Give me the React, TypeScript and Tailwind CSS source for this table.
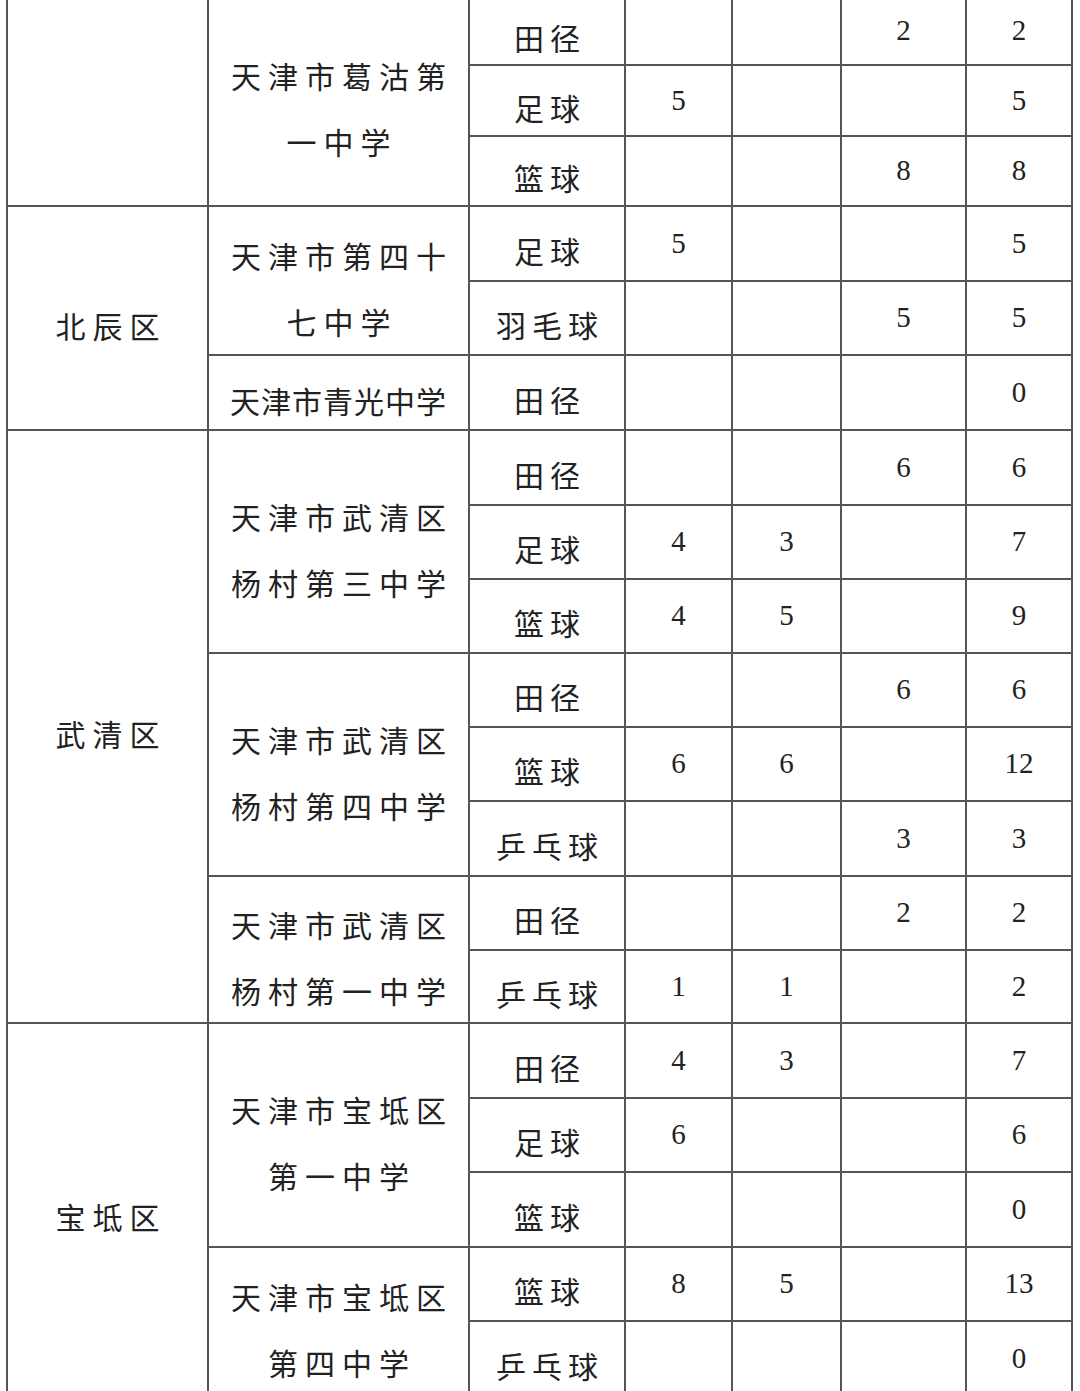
import React from "react";

type Row = { sport: string; vals: (number | "")[] };

const rows: Row[] = [
  { sport: "田径", vals: ["", "", 2, 2] },
  { sport: "足球", vals: [5, "", "", 5] },
  { sport: "篮球", vals: ["", "", 8, 8] },
  { sport: "足球", vals: [5, "", "", 5] },
  { sport: "羽毛球", vals: ["", "", 5, 5] },
  { sport: "田径", vals: ["", "", "", 0] },
  { sport: "田径", vals: ["", "", 6, 6] },
  { sport: "足球", vals: [4, 3, "", 7] },
  { sport: "篮球", vals: [4, 5, "", 9] },
  { sport: "田径", vals: ["", "", 6, 6] },
  { sport: "篮球", vals: [6, 6, "", 12] },
  { sport: "乒乓球", vals: ["", "", 3, 3] },
  { sport: "田径", vals: ["", "", 2, 2] },
  { sport: "乒乓球", vals: [1, 1, "", 2] },
  { sport: "田径", vals: [4, 3, "", 7] },
  { sport: "足球", vals: [6, "", "", 6] },
  { sport: "篮球", vals: ["", "", "", 0] },
  { sport: "篮球", vals: [8, 5, "", 13] },
  { sport: "乒乓球", vals: ["", "", "", 0] },
];

// first row index -> district cell
const districts: Record<number, { name: string; span: string }> = {
  0: { name: "", span: "row-span-3" },
  3: { name: "北辰区", span: "row-span-3" },
  6: { name: "武清区", span: "row-span-8" },
  14: { name: "宝坻区", span: "row-span-5" },
};

const schools: Record<number, { lines: string[]; span: string }> = {
  0: { lines: ["天津市葛沽第", "一中学"], span: "row-span-3" },
  3: { lines: ["天津市第四十", "七中学"], span: "row-span-2" },
  5: { lines: ["天津市青光中学"], span: "row-span-1" },
  6: { lines: ["天津市武清区", "杨村第三中学"], span: "row-span-3" },
  9: { lines: ["天津市武清区", "杨村第四中学"], span: "row-span-3" },
  12: { lines: ["天津市武清区", "杨村第一中学"], span: "row-span-2" },
  14: { lines: ["天津市宝坻区", "第一中学"], span: "row-span-3" },
  17: { lines: ["天津市宝坻区", "第四中学"], span: "row-span-2" },
};

const cjk = "font-['Noto_Sans_CJK_SC','Noto_Sans',sans-serif] font-normal text-[30px] text-[#222]";
const num = "font-['Liberation_Serif',serif] text-[29px] text-[#222]";

export default function App() {
  return (
    <div className="w-[1080px] h-[1391px] overflow-hidden bg-white">
      <div className="ml-[6px] -mt-[5px] w-max grid grid-cols-[199px_259px_154px_105px_107px_123px_104px] grid-rows-[67px_69px_68px_73px_72px_73px_73px_72px_72px_72px_72px_73px_72px_71px_73px_72px_73px_72px_73px] gap-[2px] p-[2px] bg-[#555]">
        {rows.map((row, i) => (
          <React.Fragment key={i}>
            {districts[i] && (
              <div className={`${districts[i].span} bg-white flex items-center justify-center pt-[14px] pl-[7px] tracking-[7px] ${cjk}`}>
                {districts[i].name}
              </div>
            )}
            {schools[i] && (
              <div className={`${schools[i].span} bg-white flex flex-col items-center justify-center pt-[14px] leading-[66px] ${cjk} ${schools[i].lines.length > 1 ? "pl-[7px] tracking-[7px]" : "tracking-[1px]"}`}>
                {schools[i].lines.map((l) => (
                  <span key={l}>{l}</span>
                ))}
              </div>
            )}
            <div className={`bg-white flex items-center justify-center pt-[13px] pl-[6px] tracking-[6px] ${cjk}`}>
              {row.sport}
            </div>
            {row.vals.map((v, j) => (
              <div key={j} className={`bg-white flex items-center justify-center ${num}`}>
                {v}
              </div>
            ))}
          </React.Fragment>
        ))}
      </div>
    </div>
  );
}
